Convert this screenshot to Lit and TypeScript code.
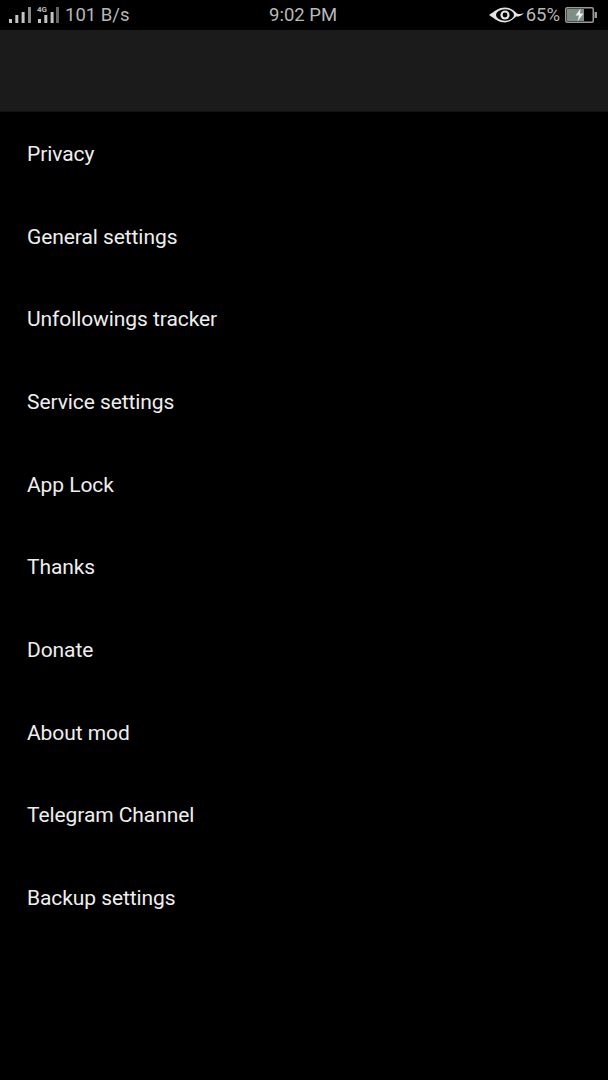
import { LitElement, css, html, svg } from "lit";
import { customElement } from "lit/decorators.js";

const ITEMS = [
  "Privacy",
  "General settings",
  "Unfollowings tracker",
  "Service settings",
  "App Lock",
  "Thanks",
  "Donate",
  "About mod",
  "Telegram Channel",
  "Backup settings",
];

const bars = (x: number, heights: number[], color: string) =>
  heights.map(
    (h, i) =>
      svg`<rect x=${x + i * 6.3} y=${20 - h} width="3" height=${h} fill=${color}></rect>`
  );

@customElement("app-root")
export class AppRoot extends LitElement {
  static styles = css`
    :host {
      display: block;
      width: 608px;
      height: 1080px;
      background: #000;
      font-family: Roboto, "Liberation Sans", sans-serif;
      overflow: hidden;
    }
    .status {
      height: 30px;
      display: flex;
      align-items: center;
      justify-content: space-between;
      color: #b8b8b8;
      font-size: 18.5px;
      padding: 0 10px 0 9px;
      position: relative;
    }
    .side {
      display: flex;
      align-items: center;
    }
    .speed {
      margin-left: 6px;
    }
    .time {
      position: absolute;
      left: 269px;
      top: 5px;
      line-height: 21px;
    }
    .pct {
      margin: 0 5px 0 2px;
    }
    .toolbar {
      height: 81px;
      background: #1b1b1b;
      border-bottom: 1px solid #111;
    }
    .list {
      display: flex;
      flex-direction: column;
      padding-top: 0.5px;
    }
    .item {
      height: 82.7px;
      display: flex;
      align-items: center;
      padding-left: 27px;
      color: #eeeeee;
      font-size: 21px;
      letter-spacing: -0.08px;
    }
    svg {
      display: block;
    }
  `;

  render() {
    return html`
      <div class="status">
        <div class="side">
          <svg width="50" height="24" viewBox="0 0 50 24">
            ${bars(0, [4, 8, 11], "#c4c4c4")}
            <rect x="19" y="4" width="3" height="16" fill="#8a8a8a"></rect>
            <text x="28" y="9" font-size="8" font-weight="700" fill="#b8b8b8" font-family="Roboto">4G</text>
            ${bars(29, [4, 8, 11], "#c4c4c4")}
            <rect x="47" y="4" width="3" height="16" fill="#666"></rect>
          </svg>
          <span class="speed">101 B/s</span>
        </div>
        <span class="time">9:02 PM</span>
        <div class="side">
          <svg width="35" height="20" viewBox="0 0 35 20">
            <path d="M0 10 C6 6 10 2.5 16 2.5 C21 2.5 25 5.5 28 8.5 C30 9.5 32 9 35 8 C32 11 29 12 27 11.5 C24 14.5 20 17.5 16 17.5 C10 17.5 6 14 0 10 Z" fill="#e4e4e4"></path>
            <ellipse cx="16" cy="10" rx="9" ry="5.8" fill="#000"></ellipse>
            <circle cx="16" cy="10" r="4.6" fill="#e4e4e4"></circle>
            <circle cx="16" cy="10" r="2.4" fill="#000"></circle>
          </svg>
          <span class="pct">65%</span>
          <svg width="33" height="16" viewBox="0 0 33 16">
            <rect x="0.75" y="0.75" width="27.5" height="14.5" rx="1.5" fill="none" stroke="#9a9a9a" stroke-width="1.5"></rect>
            <rect x="2" y="2" width="17" height="12" fill="#7d9085"></rect>
            <rect x="29.5" y="5" width="2.5" height="6" fill="#9a9a9a"></rect>
            <path d="M15.5 1.5 L10.5 8.5 H14 L12.5 14.5 L18.5 6.5 H15 Z" fill="#f0f0f0"></path>
          </svg>
        </div>
      </div>
      <div class="toolbar"></div>
      <div class="list">
        ${ITEMS.map((item) => html`<div class="item">${item}</div>`)}
      </div>
    `;
  }
}
